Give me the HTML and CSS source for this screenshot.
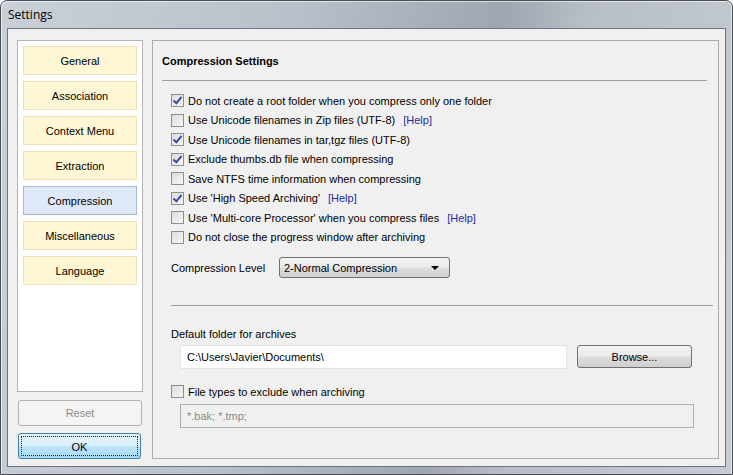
FILE: index.html
```html
<!DOCTYPE html>
<html>
<head>
<meta charset="utf-8">
<link rel="stylesheet" href="styles.css">
</head>
<body>
<div class="window">
  <div class="titlebar">Settings</div>
  <div class="client">
    <div class="leftcol">
      <div class="navpanel">
        <div class="nav">General</div>
        <div class="nav">Association</div>
        <div class="nav">Context Menu</div>
        <div class="nav">Extraction</div>
        <div class="nav selected">Compression</div>
        <div class="nav">Miscellaneous</div>
        <div class="nav">Language</div>
      </div>
      <div class="btn reset">Reset</div>
      <div class="btn ok"><span class="focus">OK</span></div>
    </div>
    <div class="panel">
      <div class="heading">Compression Settings</div>
      <div class="hr"></div>
      <div class="options">
        <div class="opt"><span class="cb checked"></span>Do not create a root folder when you compress only one folder</div>
        <div class="opt"><span class="cb"></span>Use Unicode filenames in Zip files (UTF-8)<span class="help">[Help]</span></div>
        <div class="opt"><span class="cb checked"></span>Use Unicode filenames in tar,tgz files (UTF-8)</div>
        <div class="opt"><span class="cb checked"></span>Exclude thumbs.db file when compressing</div>
        <div class="opt"><span class="cb"></span>Save NTFS time information when compressing</div>
        <div class="opt"><span class="cb checked"></span>Use 'High Speed Archiving'<span class="help">[Help]</span></div>
        <div class="opt"><span class="cb"></span>Use 'Multi-core Processor' when you compress files<span class="help">[Help]</span></div>
        <div class="opt"><span class="cb"></span>Do not close the progress window after archiving</div>
      </div>
      <div class="levelrow">
        <span class="label">Compression Level</span>
        <div class="select"><span>2-Normal Compression</span><span class="arrow"></span></div>
      </div>
      <div class="hr2"></div>
      <div class="label folderlabel">Default folder for archives</div>
      <div class="folderrow">
        <div class="input">C:\Users\Javier\Documents\</div>
        <div class="btn browse">Browse...</div>
      </div>
      <div class="opt excl"><span class="cb"></span>File types to exclude when archiving</div>
      <div class="input disabled">*.bak; *.tmp;</div>
    </div>
  </div>
</div>
</body>
</html>
```
FILE: styles.css
```css
html, body {
  margin: 0;
  padding: 0;
}
body {
  width: 733px;
  height: 475px;
  overflow: hidden;
  background: #ffffff;
  font-family: "Liberation Sans", "DejaVu Sans", sans-serif;
  font-size: 11px;
  color: #000;
}
.window {
  width: 733px;
  height: 475px;
  box-sizing: border-box;
  border: 1px solid #4a4f55;
  border-radius: 7px 7px 0 0;
  background: linear-gradient(100deg, #c9d0d8 0%, #b9c1ca 35%, #9ea6b0 62%, #b8bec6 72%, #c6ccd3 100%);
  box-shadow: inset 1px 1px 0 rgba(255,255,255,0.6), inset -1px 0 0 rgba(255,255,255,0.5);
  display: flex;
  flex-direction: column;
  padding: 0 6px 7px 6px;
}
.titlebar {
  height: 27px;
  line-height: 28px;
  padding-left: 1px;
  font-family: "Open Sans", "DejaVu Sans", sans-serif;
  font-size: 12px;
  color: #000;
}
.client {
  flex: 1;
  background: #f0f0f0;
  border: 1px solid #6c747d;
  box-sizing: border-box;
  display: flex;
  gap: 9px;
  padding: 11px 6px 7px 9px;
}
.leftcol {
  width: 126px;
  display: flex;
  flex-direction: column;
}
.navpanel {
  flex: 1;
  background: #fff;
  border: 1px solid #b4b4b4;
  padding: 5px 5px 0 5px;
  display: flex;
  flex-direction: column;
  gap: 6px;
}
.nav {
  height: 27px;
  line-height: 28px;
  text-align: center;
  background: #fef6d4;
  border: 1px solid #efe2b4;
}
.nav.selected {
  background: #dfe8f6;
  border-color: #a6b8d4;
}
.btn {
  box-sizing: border-box;
  text-align: center;
  border: 1px solid #707070;
  border-radius: 3px;
  background: linear-gradient(#f2f2f2 0%, #ebebeb 48%, #dddddd 52%, #cfcfcf 100%);
}
.reset {
  margin-top: 8px;
  margin-left: 1px;
  width: 124px;
  height: 26px;
  line-height: 25px;
  color: #8d8d8d;
  background: #f4f4f4;
  border-color: #adb2b5;
}
.ok {
  margin-top: 7px;
  margin-left: 1px;
  width: 123px;
  height: 26px;
  padding: 2px;
  border-color: #3c7fb1;
  background: linear-gradient(#eaf6fd 0%, #d9f0fc 48%, #bee6fd 52%, #a7d9f5 100%);
}
.ok .focus {
  display: block;
  height: 20px;
  line-height: 20px;
  border: 1px dotted #222;
  box-sizing: border-box;
}
.panel {
  width: 567px;
  box-sizing: border-box;
  border: 1px solid #acacac;
  padding: 0 0 0 9px;
  display: flex;
  flex-direction: column;
}
.heading {
  font-weight: bold;
  margin-top: 13px;
  height: 15px;
  line-height: 15px;
}
.hr {
  margin-top: 11px;
  margin-right: 11px;
  border-top: 1px solid #a0a0a0;
}
.options {
  margin-top: 10px;
  padding-left: 9px;
  display: flex;
  flex-direction: column;
}
.opt {
  height: 19.5px;
  display: flex;
  align-items: center;
  white-space: nowrap;
}
.cb {
  width: 11px;
  height: 11px;
  border: 1px solid #8f8f8f;
  background: linear-gradient(135deg, #dcdcdc, #f8f8f8);
  margin-right: 4px;
  flex: none;
  position: relative;
}
.cb.checked::after {
  content: "";
  position: absolute;
  left: 3px;
  top: 0px;
  width: 3px;
  height: 7px;
  border: solid #3c4fa0;
  border-width: 0 2px 2px 0;
  transform: rotate(40deg);
}
.help {
  color: #1c2ba8;
  margin-left: 8px;
}
.levelrow {
  margin-top: 10px;
  padding-left: 9px;
  display: flex;
  align-items: center;
  height: 21px;
}
.levelrow .label {
  width: 108px;
}
.select {
  width: 171px;
  height: 21px;
  box-sizing: border-box;
  border: 1px solid #707070;
  border-radius: 3px;
  background: linear-gradient(#f2f2f2 0%, #ebebeb 48%, #dddddd 52%, #cfcfcf 100%);
  display: flex;
  align-items: center;
  justify-content: space-between;
  padding: 0 10px 0 4px;
}
.arrow {
  width: 0;
  height: 0;
  border-left: 4px solid transparent;
  border-right: 4px solid transparent;
  border-top: 4px solid #000;
}
.hr2 {
  margin-top: 27px;
  margin-left: 9px;
  margin-right: 5px;
  border-top: 1px solid #a0a0a0;
}
.folderlabel {
  margin-top: 21px;
  padding-left: 9px;
  height: 14px;
  line-height: 14px;
}
.folderrow {
  margin-top: 4px;
  padding-left: 18px;
  display: flex;
  gap: 10px;
  align-items: flex-start;
}
.input {
  box-sizing: border-box;
  height: 24px;
  line-height: 22px;
  border: 1px solid #e2e3ea;
  background: #fff;
  padding-left: 6px;
}
.folderrow .input {
  width: 387px;
}
.browse {
  width: 115px;
  height: 23px;
  line-height: 22px;
}
.excl {
  margin-top: 13px;
  padding-left: 9px;
}
.input.disabled {
  margin-top: 2px;
  margin-left: 18px;
  width: 514px;
  background: #f0f0f0;
  border-color: #adadad;
  color: #8a8a8a;
}
```
